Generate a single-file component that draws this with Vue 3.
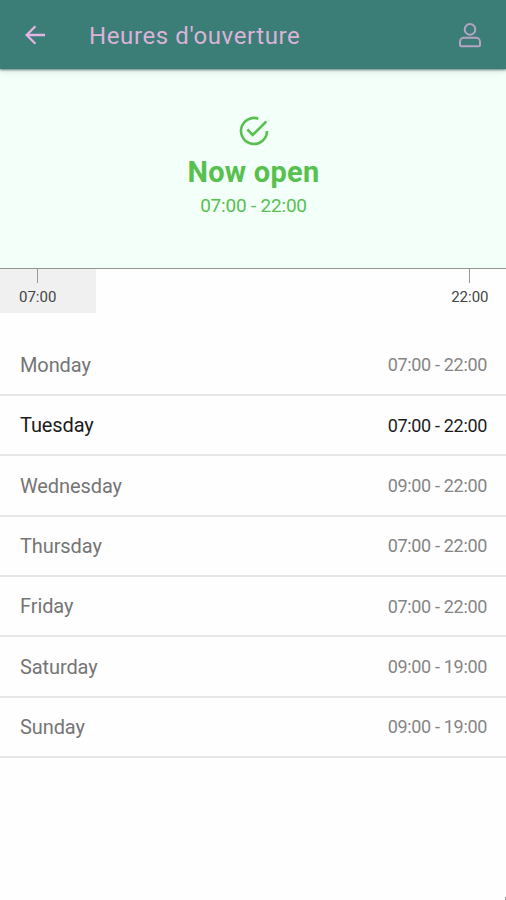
<script setup>
const days = [
  { name: 'Monday', hours: '07:00 - 22:00' },
  { name: 'Tuesday', hours: '07:00 - 22:00', today: true },
  { name: 'Wednesday', hours: '09:00 - 22:00' },
  { name: 'Thursday', hours: '07:00 - 22:00' },
  { name: 'Friday', hours: '07:00 - 22:00' },
  { name: 'Saturday', hours: '09:00 - 19:00' },
  { name: 'Sunday', hours: '09:00 - 19:00' },
]
</script>

<template>
  <div class="screen">
    <header class="bar">
      <svg class="back" viewBox="0 0 22 20" width="22" height="20">
        <path d="M20 10H2M10.400 1.200L1.600 10l8.800 8.800" />
      </svg>
      <h1 class="title">Heures d'ouverture</h1>
      <svg class="user" viewBox="0 0 24 26" width="24" height="26">
        <circle cx="12" cy="7.400" r="5.300" />
        <path d="M5.500 15.800h13c2 0 3.500 1.900 3.500 4.300v2.600c0 .9-.6 1.500-1.500 1.500h-17c-.9 0-1.500-.6-1.500-1.500v-2.600c0-2.400 1.500-4.300 3.500-4.300z" />
      </svg>
    </header>

    <section class="status">
      <svg class="check" viewBox="0 0 30 30" width="30" height="30">
        <path d="M19.300 2.700A13 13 0 1 0 28 15M8.300 13.300l5.400 5.700L27.300 5.500" />
      </svg>
      <div class="state">Now open</div>
      <div class="range">07:00 - 22:00</div>
    </section>

    <section class="timeline">
      <div class="elapsed"></div>
      <div class="mark"><i class="tick"></i><span>07:00</span></div>
      <div class="mark"><i class="tick"></i><span>22:00</span></div>
    </section>

    <ul class="days">
      <li v-for="d in days" :key="d.name" class="day" :class="{ today: d.today }">
        <span class="name">{{ d.name }}</span>
        <span class="hours">{{ d.hours }}</span>
      </li>
    </ul>
    <i class="corner"></i>
  </div>
</template>

<style>
body {
  margin: 0;
  background: #fff;
}
</style>

<style scoped>
.screen {
  position: relative;
  box-sizing: border-box;
  width: 506px;
  height: 900px;
  overflow: hidden;
  background: #fefefe;
  font-family: Roboto, "Liberation Sans", sans-serif;
}
.bar {
  position: relative;
  box-sizing: border-box;
  display: flex;
  align-items: center;
  height: 69px;
  padding: 0 24px 0 25px;
  background: #3b7d77;
  box-shadow: 0 1px 2px rgba(20, 60, 55, 0.6), 0 2px 7px rgba(0, 0, 0, 0.12);
}
.back,
.user,
.check {
  fill: none;
  flex: none;
}
.back {
  stroke: #e6b4e0;
  stroke-width: 2.3;
}
.title {
  flex: 1;
  margin: 2px 0 0 42px;
  color: #dcb2d8;
  font-size: 24px;
  font-weight: 400;
  line-height: 30px;
  letter-spacing: 0.6px;
}
.user {
  stroke: #b6a4c4;
  stroke-width: 2;
}
.status {
  box-sizing: border-box;
  display: flex;
  flex-direction: column;
  align-items: center;
  height: 200px;
  padding: 47px 0 0 1px;
  border-bottom: 1px solid #8f9793;
  background: #f3fff9;
  color: #58c04f;
}
.check {
  stroke: #58c04f;
  stroke-width: 2.6;
}
.state {
  margin-top: 8px;
  font-size: 29px;
  font-weight: 700;
  line-height: 36px;
  letter-spacing: 0.25px;
}
.range {
  margin-top: 4px;
  font-size: 19px;
  line-height: 24px;
  letter-spacing: -0.2px;
}
.timeline {
  position: relative;
  display: flex;
  justify-content: space-between;
  height: 66.700px;
  padding: 0 17.500px 0 19px;
}
.elapsed {
  position: absolute;
  top: 0;
  left: 0;
  width: 96px;
  height: 44px;
  background: #f0f0f0;
}
.mark {
  position: relative;
  display: flex;
  flex-direction: column;
  align-items: center;
  color: #444;
  font-size: 15px;
  line-height: 18px;
}
.tick {
  width: 1px;
  height: 14px;
  margin-bottom: 5px;
  background: #999;
}
.days {
  margin: 0;
  padding: 0;
  list-style: none;
}
.day {
  box-sizing: border-box;
  display: flex;
  align-items: center;
  justify-content: space-between;
  height: 60.350px;
  padding: 0 19px 0 20px;
  border-bottom: 2px solid #e6e6e6;
  color: #757575;
}
.name {
  font-size: 20px;
  letter-spacing: -0.1px;
}
.hours {
  font-size: 18px;
  letter-spacing: -0.33px;
  color: #858585;
}
.today,
.today .hours {
  color: #1c1c1c;
}
.corner {
  position: absolute;
  right: 0;
  bottom: 0;
  width: 1px;
  height: 3px;
  background: #999;
}
</style>
